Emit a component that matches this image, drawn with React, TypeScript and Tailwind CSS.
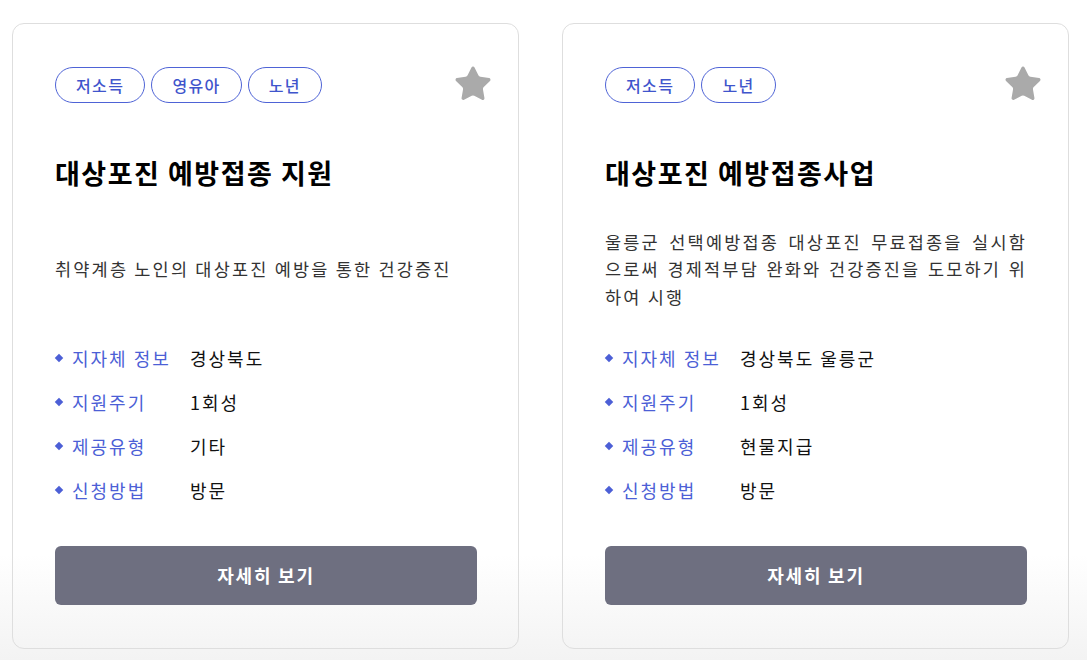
import { Star } from 'lucide-react';

interface Item {
  tags: string[];
  title: string;
  desc: string;
  info: { label: string; value: string }[];
}

const ITEMS: Item[] = [
  {
    tags: ['저소득', '영유아', '노년'],
    title: '대상포진 예방접종 지원',
    desc: '취약계층 노인의 대상포진 예방을 통한 건강증진',
    info: [
      { label: '지자체 정보', value: '경상북도' },
      { label: '지원주기', value: '1회성' },
      { label: '제공유형', value: '기타' },
      { label: '신청방법', value: '방문' },
    ],
  },
  {
    tags: ['저소득', '노년'],
    title: '대상포진 예방접종사업',
    desc: '울릉군 선택예방접종 대상포진 무료접종을 실시함으로써 경제적부담 완화와 건강증진을 도모하기 위하여 시행',
    info: [
      { label: '지자체 정보', value: '경상북도 울릉군' },
      { label: '지원주기', value: '1회성' },
      { label: '제공유형', value: '현물지급' },
      { label: '신청방법', value: '방문' },
    ],
  },
];

function Card({ item }: { item: Item }) {
  return (
    <div className="w-[507px] rounded-[12px] border border-[#dedede] pl-[42px] pr-[41px] pt-[43px] pb-[43px]">
      {/* Tags + favourite */}
      <div className="flex items-start justify-between -mr-[16px]">
        <div className="flex gap-[6px]">
          {item.tags.map(t => (
            <span
              key={t}
              className="h-[36px] px-[20px] flex items-center rounded-full border border-[#4e63d6] text-[16px] tracking-[1.4px] font-medium text-[#3f55cc]"
            >
              {t}
            </span>
          ))}
        </div>
        <Star className="w-[40px] h-[40px] text-[#aaaaaa] -mt-[3px]" fill="currentColor" strokeWidth={1} strokeLinejoin="round" />
      </div>

      <h2 className="mt-[51px] text-[27px] leading-[36px] font-bold text-black tracking-[1.5px]">{item.title}</h2>

      <div className="mt-[36px] h-[84px] flex items-center">
        <p className="text-[17.5px] leading-[27.5px] text-[#333] text-justify tracking-[2.2px]">{item.desc}</p>
      </div>

      <ul className="mt-[25px]">
        {item.info.map(row => (
          <li key={row.label} className="h-[44px] flex items-center text-[18px] tracking-[2px]">
            <span className="w-[135px] flex items-center text-[#4c5fd6]">
              <span className="w-[6px] h-[6px] ml-[1px] mr-[10px] rotate-45 bg-[#4c5fd6]" />
              {row.label}
            </span>
            <span className="text-[#111]">{row.value}</span>
          </li>
        ))}
      </ul>

      <button className="mt-[34px] w-full h-[59px] rounded-[6px] bg-[#6e6f80] text-white text-[18px] tracking-[1.8px] font-bold">
        자세히 보기
      </button>
    </div>
  );
}

export default function App() {
  return (
    <div
      className="h-[660px] overflow-hidden bg-gradient-to-b from-white from-[84%] to-[#f3f3f3] pl-[12px] pt-[23px] flex items-start gap-[43px]"
      style={{ fontFamily: '"Noto Sans CJK KR", "Noto Sans", sans-serif' }}
    >
      {ITEMS.map(item => (
        <Card key={item.title} item={item} />
      ))}
    </div>
  );
}
